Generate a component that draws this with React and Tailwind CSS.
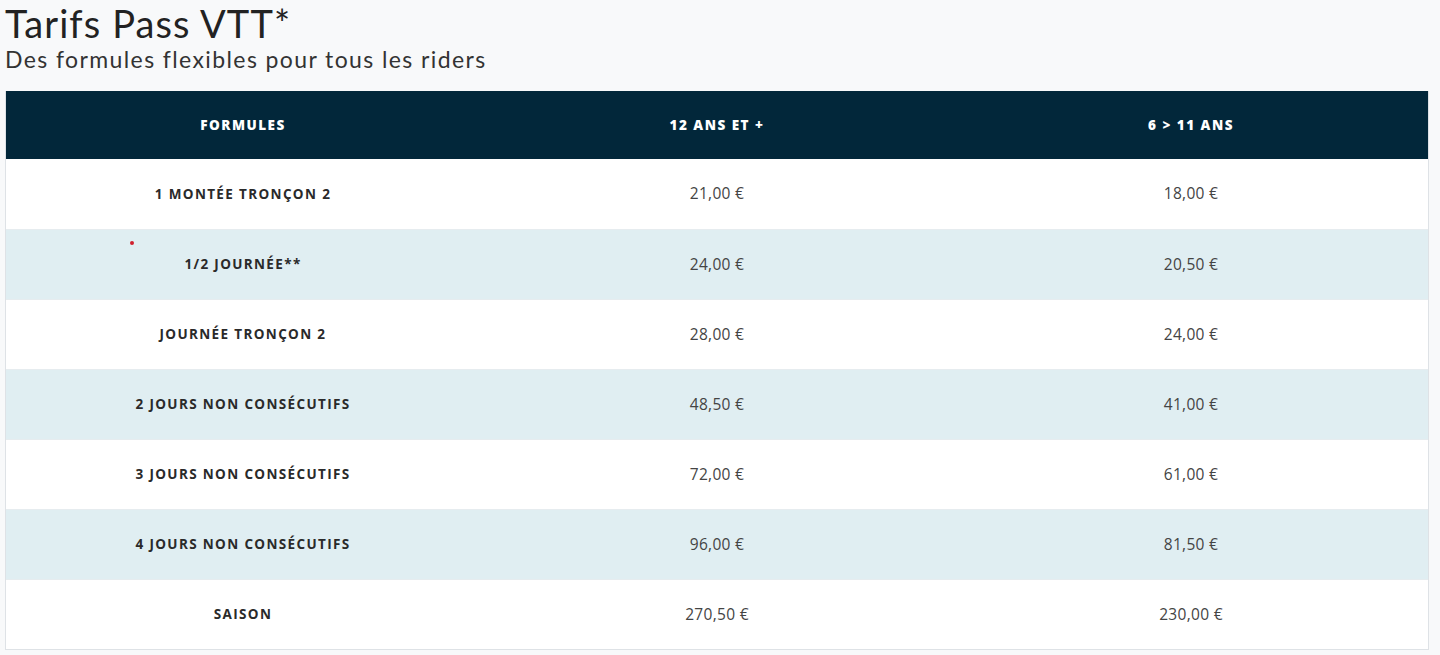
const rows = [
  { label: '1 MONTÉE TRONÇON 2', adult: '21,00 €', kid: '18,00 €' },
  { label: '1/2 JOURNÉE**', adult: '24,00 €', kid: '20,50 €', dot: true },
  { label: 'JOURNÉE TRONÇON 2', adult: '28,00 €', kid: '24,00 €' },
  { label: '2 JOURS NON CONSÉCUTIFS', adult: '48,50 €', kid: '41,00 €' },
  { label: '3 JOURS NON CONSÉCUTIFS', adult: '72,00 €', kid: '61,00 €' },
  { label: '4 JOURS NON CONSÉCUTIFS', adult: '96,00 €', kid: '81,50 €' },
  { label: 'SAISON', adult: '270,50 €', kid: '230,00 €' },
]

export default function App() {
  return (
    <div className="min-h-[655px] bg-[#f8f9fa] text-[#222] font-['Open_Sans','Noto_Sans',sans-serif]">
      <div className="pl-[5px] pr-[11px]">
        <h1 className="font-['Lato',sans-serif] text-[38px] font-normal leading-[46px] text-[#222] tracking-[1.1px]">Tarifs Pass VTT*</h1>
        <p className="font-['Lato',sans-serif] text-[23px] leading-[26px] text-[#333] tracking-[1.4px]">Des formules flexibles pour tous les riders</p>

        <div className="mt-[19px] border border-[#dee2e6] border-t-0">
          <div className="grid grid-cols-3 h-[68px] bg-[#02273a] text-white text-[13.5px] font-extrabold tracking-[0.11em]">
            <div className="flex items-center justify-center">FORMULES</div>
            <div className="flex items-center justify-center">12 ANS ET +</div>
            <div className="flex items-center justify-center">6 &gt; 11 ANS</div>
          </div>
          {rows.map((r, i) => (
            <div
              key={r.label}
              className={`grid grid-cols-3 h-[70px] ${i % 2 === 1 ? 'bg-[#e0eef2]' : 'bg-white'} ${i > 0 ? 'border-t border-[#e6ecef]' : ''}`}
            >
              <div className="relative flex items-center justify-center text-[13.5px] font-bold tracking-[0.1em] text-[#2a2a2a]">
                {r.dot && <span className="absolute left-[124px] top-[11px] w-[4px] h-[4px] rounded-full bg-[#d0202e]" />}
                {r.label}
              </div>
              <div className="flex items-center justify-center text-[15.5px] tracking-[0.3px] text-[#444]">{r.adult}</div>
              <div className="flex items-center justify-center text-[15.5px] tracking-[0.3px] text-[#444]">{r.kid}</div>
            </div>
          ))}
        </div>
      </div>
    </div>
  )
}
